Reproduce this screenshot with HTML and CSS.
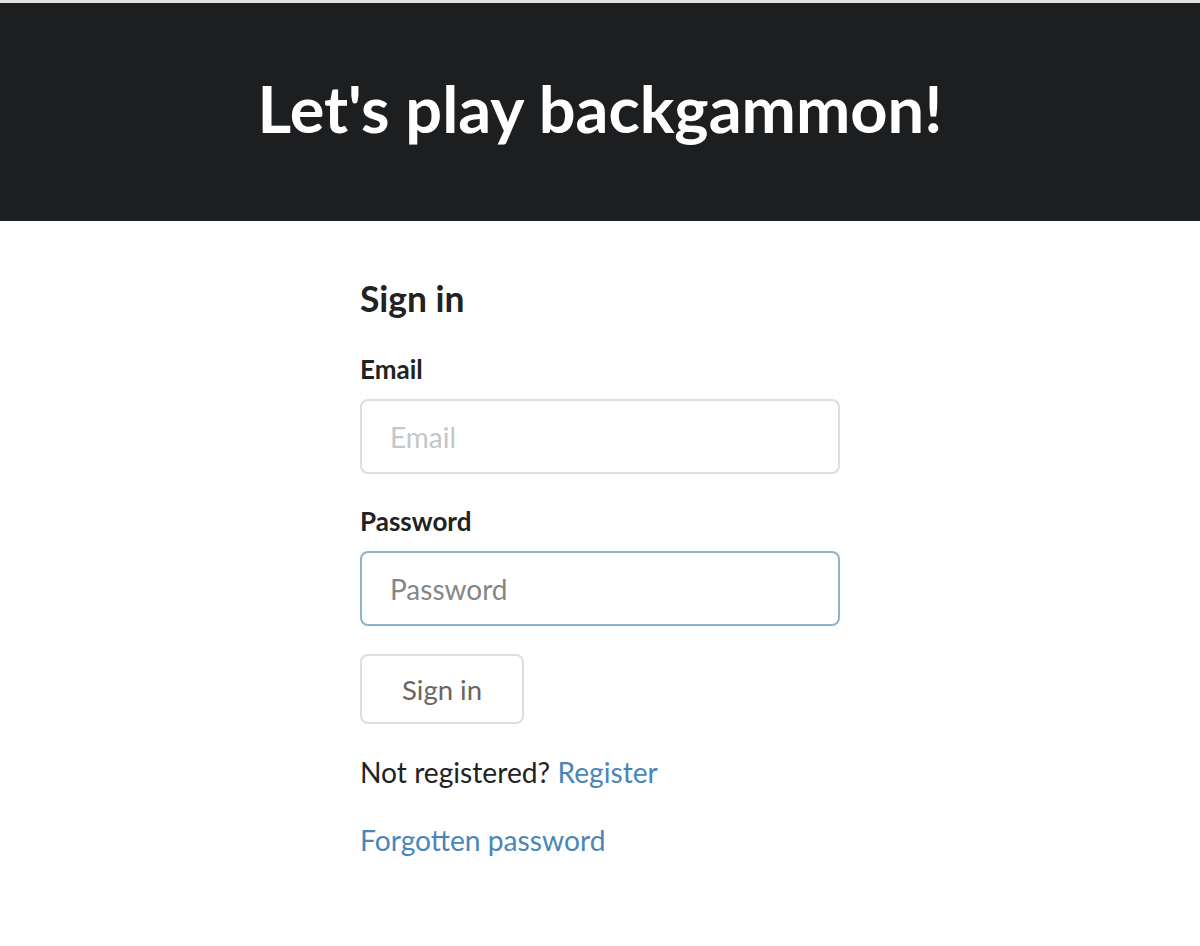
FILE: index.html
```html
<!DOCTYPE html>
<html lang="en">
<head>
<meta charset="utf-8">
<title>Let's play backgammon!</title>
<link rel="stylesheet" href="styles.css">
</head>
<body>
<header class="hero">
  <h1 class="hero-title">Let's play backgammon!</h1>
</header>
<main class="signin">
  <h2 class="signin-title">Sign in</h2>
  <form class="signin-form">
    <div class="field">
      <label class="field-label" for="email">Email</label>
      <input class="field-input" id="email" type="email" placeholder="Email">
    </div>
    <div class="field">
      <label class="field-label" for="password">Password</label>
      <input class="field-input field-input--focus" id="password" type="password" placeholder="Password">
    </div>
    <button class="btn" type="button">Sign in</button>
  </form>
  <p class="signin-note">Not registered? <a class="link" href="#">Register</a></p>
  <p class="signin-note"><a class="link" href="#">Forgotten password</a></p>
</main>
</body>
</html>
```
FILE: styles.css
```css
* { box-sizing: border-box; }
html, body { margin: 0; padding: 0; background: #fff; }
body {
  font-family: Lato, "Open Sans", sans-serif;
  color: #222;
}
.hero {
  border-top: 3px solid #e2e2e2;
  background: #1d1e20;
  height: 221px;
  padding-bottom: 8px;
  display: flex;
  align-items: center;
  justify-content: center;
}
.hero-title {
  margin: 0;
  color: #fff;
  font-weight: 700;
  font-size: 64.9px;
  line-height: 1;
}
.signin {
  width: 480px;
  margin: 0 auto;
  padding-top: 57px;
}
.signin-title {
  margin: 0 0 31px;
  font-size: 35.4px;
  font-weight: 700;
  line-height: 42px;
  color: #222;
}
.signin-form { display: flex; flex-direction: column; align-items: flex-start; }
.field {
  align-self: stretch;
  margin-bottom: 29px;
  display: flex;
  flex-direction: column;
}
.field-label {
  font-size: 26px;
  font-weight: 700;
  line-height: 36px;
  margin-bottom: 12px;
  color: #222;
}
.field-input {
  height: 75px;
  border: 2px solid #dedede;
  border-radius: 8px;
  padding: 0 28px;
  font-family: inherit;
  font-size: 28px;
  color: #222;
  background: #fff;
  outline: none;
}
.field-input::placeholder { color: #c6c6c6; }
.field-input--focus { border-color: #8db3cf; }
.field-input--focus::placeholder { color: #868686; }
.btn {
  height: 70px;
  padding: 0 40px;
  border: 2px solid #dedede;
  border-radius: 8px;
  background: #fff;
  font-family: inherit;
  font-size: 27.5px;
  color: #666;
  margin-top: -1px;
}
.signin-note {
  margin: 28px 0 0;
  font-size: 28.2px;
  line-height: 40px;
}
.link { color: #4a86b8; text-decoration: none; }
```
